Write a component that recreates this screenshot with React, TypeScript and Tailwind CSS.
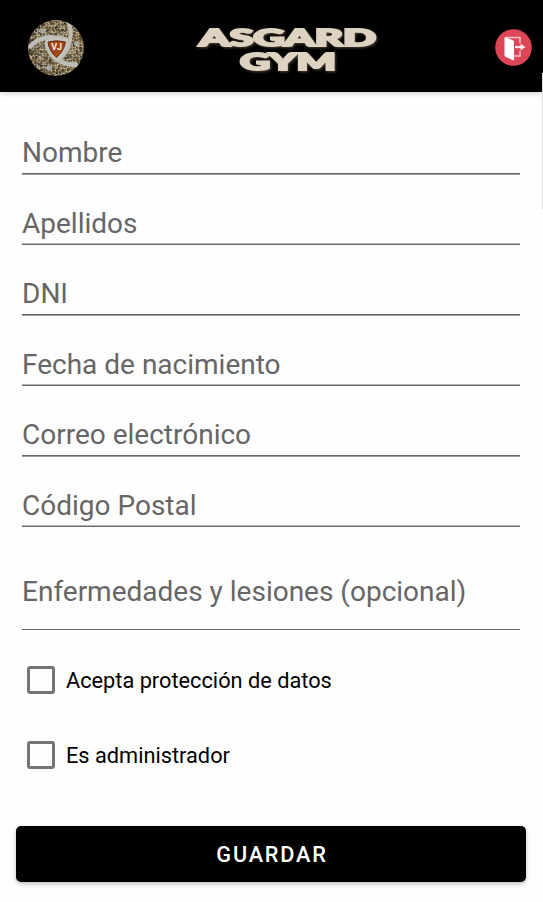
import { useState } from 'react';

const below = 'shadow-[0_1px_0_#9c9c9c]';
const above = 'shadow-[inset_0_-1px_0_#b4b4b4]';

const fields = [
  { label: 'Nombre', row: 'h-[70px]', edge: below },
  { label: 'Apellidos', row: 'h-[71px]', edge: above },
  { label: 'DNI', row: 'h-[70px]', edge: below },
  { label: 'Fecha de nacimiento', row: 'h-[71px]', edge: above },
  { label: 'Correo electrónico', row: 'h-[70px]', edge: below },
  { label: 'Código Postal', row: 'h-[71px]', edge: above },
];

function Emblem() {
  const tones = ['#a58a5c', '#6b5a3c', '#c9b88f', '#8b8576', '#3d3629', '#aaa392', '#7d6a48'];
  const stones = [];
  let seed = 7;
  for (let y = 0; y < 38; y++) {
    for (let x = 0; x < 38; x++) {
      seed = (seed * 16807) % 2147483647;
      stones.push(
        <rect key={`${x}-${y}`} x={x * 1.5} y={y * 1.5} width="1.6" height="1.6" fill={tones[(seed >> 8) % 7]} />,
      );
    }
  }
  return (
    <svg className="h-14 w-14" viewBox="0 0 56 56">
      <defs>
        <clipPath id="disc"><circle cx="28" cy="28" r="28" /></clipPath>
      </defs>
      <g clipPath="url(#disc)">
        {stones}
        <g fill="none" stroke="#bdbcb5" strokeWidth="4.2">
          <path d="M1 28C7 20 17 16 27 17.500C32 18 37 18 41 21" />
          <path d="M39 0C45 9 43 25 36 34C34 37 31 39 28 40" />
          <path d="M19 20C17 31 27 45 50 45" />
        </g>
        <g fill="#a9aaa5">
          <circle cx="15" cy="11" r="2.7" /><circle cx="49" cy="24" r="2.7" /><circle cx="21" cy="48" r="2.7" />
        </g>
        <path d="M17.500 20Q28 15.500 40 20Q39 33 29 40Q18 32 17.500 20Z" fill="#c5c3bc" />
        <path d="M20 22Q28 19.500 37.500 22Q36 31 28.500 37.500Q21 31 20 22Z" fill="#a34517" stroke="#65301a" />
        <text x="28.700" y="30" textAnchor="middle" fontSize="9" className="fill-[#f3eee8] font-['Roboto',sans-serif] font-bold">VJ</text>
      </g>
    </svg>
  );
}

function Wordmark() {
  return (
    <svg className="h-[60px] w-[200px]" viewBox="0 0 200 60">
      <defs>
        <filter id="glow" x="-10%" y="-10%" width="120%" height="130%">
          <feDropShadow dx="1.2" dy="1.2" stdDeviation="1" floodColor="#8a795c" floodOpacity=".5" />
        </filter>
      </defs>
      <g filter="url(#glow)" className="fill-[#ded3c0] stroke-[#ded3c0] font-['Lato',sans-serif] font-black" strokeWidth="2">
        <text x="13" y="27.300" fontSize="23" textLength="177" lengthAdjust="spacingAndGlyphs">ASGARD</text>
        <text x="54" y="50.500" fontSize="23" textLength="96" lengthAdjust="spacingAndGlyphs">GYM</text>
      </g>
    </svg>
  );
}

function ExitIcon() {
  return (
    <svg className="h-[37px] w-[37px]" viewBox="0 0 37 37">
      <circle cx="18.500" cy="18.500" r="18.300" fill="#dc4657" />
      <path d="M10 8.500L18.500 12V31L10 27Z" fill="#fff" stroke="#fff" strokeWidth="1" />
      <path d="M11 8.500H25V14M25 22V27H19" fill="none" stroke="#f3c4ca" strokeWidth="1.500" />
      <path d="M20 18H28" stroke="#fbe6e8" strokeWidth="2.200" />
      <path d="M25.500 14.500L30.500 18L25.500 21.500Z" fill="#fbe6e8" />
    </svg>
  );
}

function Check({ label }: { label: string }) {
  const [on, setOn] = useState(false);
  return (
    <label className="flex h-[75px] items-center gap-[11px] pl-[27px] text-[21.750px] text-black">
      <input type="checkbox" checked={on} onChange={() => setOn(!on)} className="h-7 w-7 appearance-none rounded-[3px] border-3 border-[#757575] checked:bg-black" />
      <span className="pt-1">{label}</span>
    </label>
  );
}

export default function App() {
  return (
    <div className="relative h-[902px] w-[543px] overflow-hidden bg-[#fefefe] font-['Roboto',sans-serif]">
      <header className="flex h-[92px] items-start bg-black shadow-[0_1px_6px_rgba(0,0,0,0.2)]">
        <div className="pt-5 pl-7"><Emblem /></div>
        <div className="ml-[102px] pt-[19px]"><Wordmark /></div>
        <button className="ml-[109px] pt-[29px]" aria-label="Salir"><ExitIcon /></button>
      </header>
      <form className="flex flex-col" onSubmit={(e) => e.preventDefault()}>
        <div className="flex flex-col pt-3 pr-[23px] pl-[22px]">
          {fields.map((f) => (
            <div key={f.label} className={`flex flex-col justify-end ${f.row}`}>
              <input placeholder={f.label} className={`h-10 w-full border-b border-[#666] pb-px text-[28px] outline-none placeholder:text-[#666] placeholder:opacity-100 ${f.edge}`} />
            </div>
          ))}
          <div className="flex h-[103px] flex-col justify-end">
            <input placeholder="Enfermedades y lesiones (opcional)" className="h-[76px] w-full border-b border-[#666] text-[28px] outline-none placeholder:text-[#666] placeholder:opacity-100" />
          </div>
        </div>
        <div className="pt-3">
          <Check label="Acepta protección de datos" />
          <Check label="Es administrador" />
        </div>
        <button className="mt-[34px] mr-[17px] ml-4 h-14 rounded-[5px] bg-black pt-[3px] pl-0.5 text-[21.700px] font-medium tracking-[1.800px] text-white shadow-[0_2px_4px_rgba(0,0,0,0.25)]">GUARDAR</button>
      </form>
      <div className="absolute top-[73px] right-0 h-[136px] w-px bg-[#ddd]" />
    </div>
  );
}
